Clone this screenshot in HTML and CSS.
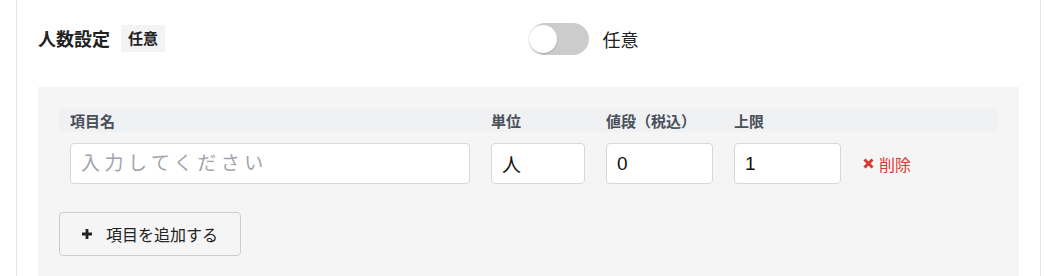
FILE: index.html
```html
<!DOCTYPE html>
<html lang="ja">
<head>
    <meta charset="UTF-8">
    <meta name="viewport" content="width=device-width, initial-scale=1.0">
    <title>人数設定</title>
    <link rel="stylesheet" href="styles.css">
</head>
<body>
    <div class="card">
        <div class="field-row">
            <div class="field-label">
                <span class="field-title">人数設定</span>
                <span class="badge">任意</span>
            </div>
            <div class="field-control">
                <label class="switch">
                    <input type="checkbox">
                    <span class="slider"></span>
                </label>
                <span class="switch-text">任意</span>
            </div>
        </div>

        <div class="items-panel">
            <div class="items-grid items-head">
                <div>項目名</div>
                <div>単位</div>
                <div>値段（税込）</div>
                <div>上限</div>
                <div></div>
            </div>
            <div class="items-grid items-row">
                <input class="text-input name-input" type="text" placeholder="入力してください">
                <input class="text-input" type="text" value="人">
                <input class="text-input" type="text" value="0">
                <input class="text-input" type="text" value="1">
                <a class="delete-link" href="#">
                    <svg class="icon" width="11" height="11" viewBox="0 0 11 11"><path d="M1.5 1.5 L9.5 9.5 M9.5 1.5 L1.5 9.5" stroke="currentColor" stroke-width="3"/></svg>
                    削除
                </a>
            </div>
            <button class="add-btn" type="button">
                <svg class="icon" width="12" height="12" viewBox="0 0 12 12"><path d="M6 1 V11 M1 6 H11" stroke="currentColor" stroke-width="2.8"/></svg>
                項目を追加する
            </button>
        </div>
    </div>
</body>
</html>
```

FILE: styles.css
```css
:root {
    --border-color: #e4e4e4;
    --panel-color: #f5f5f5;
    --head-color: #f0f1f3;
    --text-color: #222;
    --danger-color: #d8382e;
}
body {
    margin: 0;
    font-family: "Liberation Sans", "Noto Sans CJK JP", sans-serif;
    color: var(--text-color);
    background: #fff;
    overflow: hidden;
}
.card {
    margin-left: 16px;
    width: 1025px;
    min-height: 276px;
    box-sizing: border-box;
    border-left: 1px solid var(--border-color);
    border-right: 1px solid var(--border-color);
    padding: 23px 21px 0;
}
.field-row {
    display: grid;
    grid-template-columns: 1fr 1fr;
}
.field-label {
    display: flex;
    align-items: center;
    gap: 11px;
    height: 30px;
}
.field-title { font-size: 18px; font-weight: bold; }
.badge {
    background: #f3f3f3;
    font-size: 15px;
    font-weight: bold;
    padding: 0 7px;
    height: 27px;
    line-height: 27px;
    border-radius: 2px;
}
.field-control {
    display: flex;
    align-items: center;
    gap: 14px;
}
.switch {
    position: relative;
    display: inline-block;
    width: 60px;
    height: 32px;
}
.switch input { opacity: 0; width: 0; height: 0; }
.slider {
    position: absolute;
    inset: 0;
    background: #cccccc;
    border-radius: 16px;
    cursor: pointer;
}
.slider::before {
    content: "";
    position: absolute;
    left: 0;
    top: 2px;
    width: 28px;
    height: 28px;
    border-radius: 50%;
    background: #fff;
    box-shadow: 0 1px 2px rgba(0, 0, 0, 0.2);
}
.switch-text { font-size: 18px; }

.items-panel {
    margin-top: 32px;
    background: var(--panel-color);
    padding: 21px;
    min-height: 200px;
}
.items-grid {
    display: grid;
    grid-template-columns: 400px 94px 107px 107px 1fr;
    column-gap: 21px;
    padding: 0 11px;
    align-items: center;
}
.items-head {
    background: var(--head-color);
    height: 24px;
    font-size: 15px;
    font-weight: bold;
    color: #4a505a;
}
.items-row { margin-top: 11px; }
.text-input {
    height: 41px;
    box-sizing: border-box;
    width: 100%;
    border: 1px solid #d5d8dd;
    border-radius: 4px;
    padding: 0 10px;
    font-family: inherit;
    font-size: 19px;
    color: #111;
    background: #fff;
}
.name-input::placeholder {
    color: #a0a4aa;
    letter-spacing: 4.5px;
}
.icon { flex-shrink: 0; }
.delete-link {
    display: flex;
    align-items: center;
    gap: 5px;
    color: var(--danger-color);
    text-decoration: none;
    font-size: 16px;
    margin-left: 1px;
}
.add-btn {
    margin-top: 28px;
    width: 182px;
    height: 44px;
    display: flex;
    align-items: center;
    gap: 13px;
    padding: 0 0 0 21px;
    border: 1px solid #cdcdcd;
    border-radius: 4px;
    background: var(--panel-color);
    font-family: inherit;
    font-size: 16px;
    color: var(--text-color);
    cursor: pointer;
}
```
